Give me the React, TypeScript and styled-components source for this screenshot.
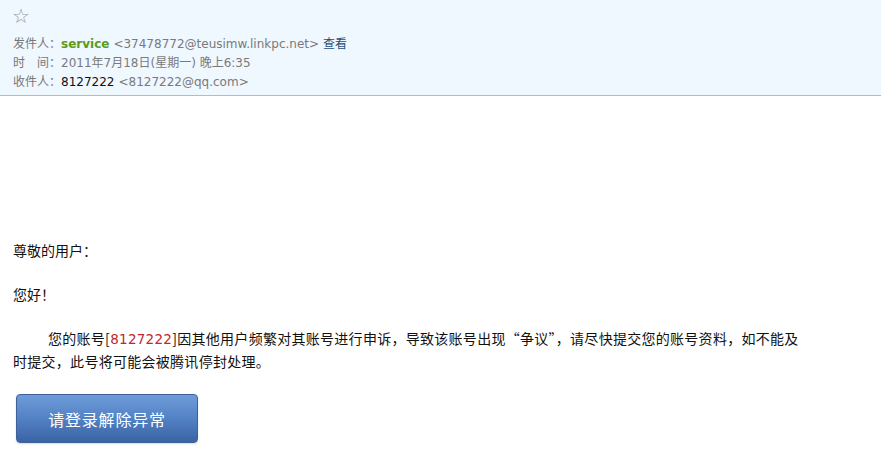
import React from "react";
import styled, { createGlobalStyle } from "styled-components";

const GlobalStyle = createGlobalStyle`
  html, body {
    margin: 0;
    padding: 0;
    background: #ffffff;
  }
  body {
    font-family: "DejaVu Sans", "Noto Sans CJK SC", sans-serif;
  }
`;

const cjk = `"Noto Sans CJK SC", "DejaVu Sans", sans-serif`;

const MailHeader = styled.div`
  background-color: #eff7ff;
  border-bottom: 1px solid #abc0cc;
  padding: 6px 13px 5px;
  height: 84px;
`;

const StarRow = styled.div`
  height: 20px;
  line-height: 20px;
  margin-bottom: 7px;
  margin-left: -1px;
  color: #9c9c9c;
  font-size: 20px;
  font-family: "DejaVu Sans", sans-serif;
`;

const MetaRow = styled.div`
  display: flex;
  align-items: baseline;
  height: 19px;
  line-height: 19px;
  font-size: 12px;
  color: #7a7a7a;
  white-space: nowrap;
`;

const Label = styled.span`
  font-family: ${cjk};
  color: #777777;
`;

const Sender = styled.b`
  color: #5d9a16;
  font-family: "DejaVu Sans", sans-serif;
  font-weight: bold;
  font-size: 12px;
`;

const Address = styled.span`
  font-family: "DejaVu Sans", sans-serif;
  font-size: 12px;
  color: #7a7a7a;
  margin-left: 4px;
`;

const DateText = styled.span`
  font-family: "DejaVu Sans", "Noto Sans CJK SC", sans-serif;
  font-size: 12px;
  color: #7a7a7a;
`;

const Receiver = styled.span`
  font-family: "DejaVu Sans", sans-serif;
  font-size: 12px;
  color: #111111;
`;

const ViewLink = styled.a`
  font-family: ${cjk};
  color: #1f4e79;
  text-decoration: none;
  margin-left: 4px;
  cursor: pointer;
`;

const MailBody = styled.div`
  padding: 143px 13px 30px;
  font-family: ${cjk};
  font-size: 14px;
  color: #111111;
`;

const Para = styled.p<{ indent?: boolean }>`
  margin: 0 0 22px;
  line-height: 22px;
  white-space: nowrap;
  text-indent: ${(props) => (props.indent ? "35px" : "0")};
  letter-spacing: ${(props) => (props.indent ? "0.28px" : "0")};
`;

const Account = styled.span`
  color: #c4262b;
  font-family: "DejaVu Sans", sans-serif;
  font-size: 13.5px;
`;

const UnlockButton = styled.button`
  display: flex;
  align-items: center;
  justify-content: center;
  width: 182px;
  height: 49px;
  margin-left: 3px;
  border: 1px solid #3e6199;
  border-radius: 4px;
  background: linear-gradient(to bottom, #6f9bd9 0%, #5584c7 45%, #3a64a4 100%);
  color: #ffffff;
  font-family: ${cjk};
  font-size: 16px;
  letter-spacing: 0.8px;
  cursor: pointer;
  box-shadow: 0 1px 2px rgba(0, 0, 0, 0.15);
`;

export default function App() {
  return (
    <>
      <GlobalStyle />
      <MailHeader>
        <StarRow>☆</StarRow>
        <MetaRow>
          <Label>发件人：</Label>
          <Sender>service</Sender>
          <Address>&lt;37478772@teusimw.linkpc.net&gt;</Address>
          <ViewLink>查看</ViewLink>
        </MetaRow>
        <MetaRow>
          <Label>时　间：</Label>
          <DateText>2011年7月18日(星期一) 晚上6:35</DateText>
        </MetaRow>
        <MetaRow>
          <Label>收件人：</Label>
          <Receiver>8127222</Receiver>
          <Address>&lt;8127222@qq.com&gt;</Address>
        </MetaRow>
      </MailHeader>
      <MailBody>
        <Para>尊敬的用户：</Para>
        <Para>您好！</Para>
        <Para indent>
          您的账号[<Account>8127222</Account>]因其他用户频繁对其账号进行申诉，导致该账号出现“争议”，请尽快提交您的账号资料，如不能及
          <br />
          时提交，此号将可能会被腾讯停封处理。
        </Para>
        <UnlockButton>请登录解除异常</UnlockButton>
      </MailBody>
    </>
  );
}
